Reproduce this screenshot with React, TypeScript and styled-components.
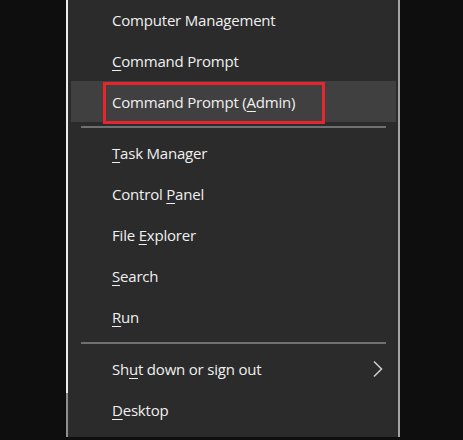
import React, { FC } from "react";
import styled, { createGlobalStyle } from "styled-components";

const GlobalStyle = createGlobalStyle`
  html, body {
    margin: 0;
    padding: 0;
    background: #0e0e0e;
  }
  body {
    width: 463px;
    height: 440px;
    overflow: hidden;
    font-family: "Open Sans", "Noto Sans", "Liberation Sans", sans-serif;
  }
`;

const Page = styled.div`
  display: flex;
  padding-left: 66px;
  height: 440px;
`;

const Menu = styled.div`
  width: 330px;
  height: 438px;
  margin-top: -1px;
  padding-left: 2px;
  border-right: 2px solid #a3a3a3;
  background:
    linear-gradient(to bottom, #ececec 394px, #8e8e8e 394px) left top / 2px
      100% no-repeat,
    #2b2b2b;
  display: flex;
  flex-direction: column;
`;

const Item = styled.div<{ $active?: boolean }>`
  position: relative;
  height: 41px;
  margin: 0 2px 0 3px;
  padding-left: 41px;
  padding-right: 12px;
  display: flex;
  align-items: center;
  justify-content: space-between;
  color: #f0f0f0;
  font-size: 15px;
  font-weight: 500;
  letter-spacing: -0.2px;
  background: ${(p) => (p.$active ? "#404040" : "transparent")};
`;

const Key = styled.span`
  text-decoration: underline;
  text-underline-offset: 3px;
  text-decoration-thickness: 1px;
`;

const Separator = styled.div<{ $extra?: number }>`
  height: 2px;
  margin: ${(p) => 4 + (p.$extra ?? 0)}px 12px 4px 13px;
  background: #707070;
`;

const Callout = styled.div`
  position: absolute;
  left: 32px;
  top: 1px;
  width: 216px;
  height: 36px;
  border: 3px solid #e5262f;
  pointer-events: none;
`;

const Chevron: FC = () => (
  <svg width="12" height="18" viewBox="0 0 12 18">
    <path
      d="M2 1.5 L9.5 9 L2 16.5"
      fill="none"
      stroke="#c9c9c9"
      strokeWidth="1.6"
    />
  </svg>
);

const App: FC = () => (
  <>
    <GlobalStyle />
    <Page>
      <Menu>
        <Item>Computer Management</Item>
        <Item>
          <span>
            <Key>C</Key>ommand Prompt
          </span>
        </Item>
        <Item $active>
          <span>
            Command Prompt (<Key>A</Key>dmin)
          </span>
          <Callout />
        </Item>
        <Separator />
        <Item>
          <span>
            <Key>T</Key>ask Manager
          </span>
        </Item>
        <Item>
          <span>
            Control <Key>P</Key>anel
          </span>
        </Item>
        <Item>
          <span>
            File <Key>E</Key>xplorer
          </span>
        </Item>
        <Item>
          <span>
            <Key>S</Key>earch
          </span>
        </Item>
        <Item>
          <span>
            <Key>R</Key>un
          </span>
        </Item>
        <Separator $extra={1} />
        <Item>
          <span>
            Sh<Key>u</Key>t down or sign out
          </span>
          <Chevron />
        </Item>
        <Item>
          <span>
            <Key>D</Key>esktop
          </span>
        </Item>
      </Menu>
    </Page>
  </>
);

export default App;
